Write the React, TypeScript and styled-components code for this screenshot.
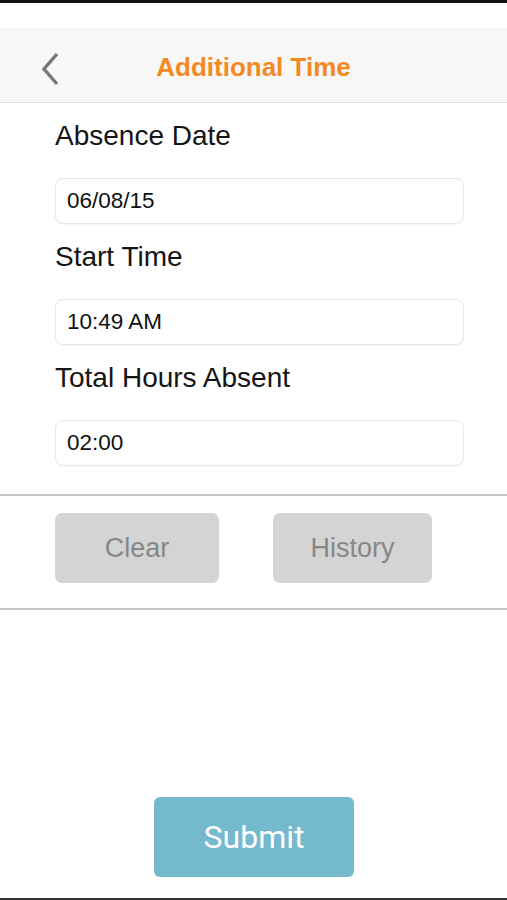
import React from "react";
import styled, { createGlobalStyle } from "styled-components";

const Global = createGlobalStyle`
  html, body { margin: 0; padding: 0; background: #ffffff; }
  body { font-family: "Liberation Sans", Arial, sans-serif; }
  * { box-sizing: border-box; }
`;

const Screen = styled.div`
  width: 507px;
  height: 900px;
  display: flex;
  flex-direction: column;
  background: #ffffff;
  border-top: 3px solid #111111;
  border-bottom: 2px solid #333333;
`;

const StatusBar = styled.div`
  height: 25px;
  background: #ffffff;
`;

const Header = styled.header`
  height: 75px;
  background: #f7f7f7;
  border-bottom: 1px solid #e2e2e2;
  display: grid;
  grid-template-columns: 1fr auto 1fr;
  align-items: center;
`;

const BackButton = styled.button`
  justify-self: start;
  margin-left: 40px;
  margin-top: 8px;
  padding: 0;
  border: none;
  background: transparent;
  display: flex;
  align-items: center;
  width: 20px;
  height: 34px;
`;

const Title = styled.h1`
  margin: 5px 0 0 0;
  font-family: "Liberation Sans", Arial, sans-serif;
  font-size: 26px;
  font-weight: 700;
  color: #f5891f;
`;

const Form = styled.section`
  padding: 16px 43px 28px 55px;
  display: flex;
  flex-direction: column;
`;

const Field = styled.div`
  display: flex;
  flex-direction: column;
  & + & { margin-top: 16px; }
`;

const Label = styled.label`
  font-family: "Liberation Sans", Arial, sans-serif;
  font-size: 28px;
  line-height: 34px;
  color: #151515;
  margin-bottom: 25px;
`;

const Input = styled.div`
  height: 46px;
  border: 1px solid #e6e6e6;
  border-radius: 8px;
  background: #ffffff;
  display: flex;
  align-items: center;
  padding-left: 11px;
  font-family: "Liberation Sans", Arial, sans-serif;
  font-size: 22.5px;
  color: #111111;
  box-shadow: 0 1px 1px rgba(0, 0, 0, 0.03);
`;

const Divider = styled.div`
  height: 2px;
  background: #c6c6c6;
`;

const ButtonRow = styled.div`
  display: flex;
  padding: 17px 0 25px 55px;
  gap: 54px;
`;

const GrayButton = styled.button<{ $w: number }>`
  width: ${(p) => p.$w}px;
  height: 70px;
  border: none;
  border-radius: 7px;
  background: #d4d4d4;
  color: #878787;
  font-family: "Liberation Sans", Arial, sans-serif;
  font-size: 27px;
  padding: 0;
`;

const Spacer = styled.div`
  flex: 1;
`;

const SubmitRow = styled.div`
  display: flex;
  justify-content: center;
  padding: 0 0 21px 0;
  margin-left: 1px;
`;

const SubmitButton = styled.button`
  width: 200px;
  height: 80px;
  border: none;
  border-radius: 6px;
  background: #75b9cf;
  color: #ffffff;
  font-family: Roboto, "Liberation Sans", Arial, sans-serif;
  font-size: 32px;
  padding: 0;
`;

const Chevron = () => (
  <svg width="20" height="34" viewBox="0 0 20 34" fill="none">
    <path d="M17 2 L4 17 L17 32" stroke="#777777" strokeWidth="3.4" strokeLinecap="butt" strokeLinejoin="miter" />
  </svg>
);

export default function App() {
  return (
    <>
      <Global />
      <Screen>
        <StatusBar />
        <Header>
          <BackButton aria-label="Back">
            <Chevron />
          </BackButton>
          <Title>Additional Time</Title>
          <span />
        </Header>
        <Form>
          <Field>
            <Label>Absence Date</Label>
            <Input>06/08/15</Input>
          </Field>
          <Field>
            <Label>Start Time</Label>
            <Input>10:49 AM</Input>
          </Field>
          <Field>
            <Label>Total Hours Absent</Label>
            <Input>02:00</Input>
          </Field>
        </Form>
        <Divider />
        <ButtonRow>
          <GrayButton $w={164}>Clear</GrayButton>
          <GrayButton $w={159}>History</GrayButton>
        </ButtonRow>
        <Divider />
        <Spacer />
        <SubmitRow>
          <SubmitButton>Submit</SubmitButton>
        </SubmitRow>
      </Screen>
    </>
  );
}
